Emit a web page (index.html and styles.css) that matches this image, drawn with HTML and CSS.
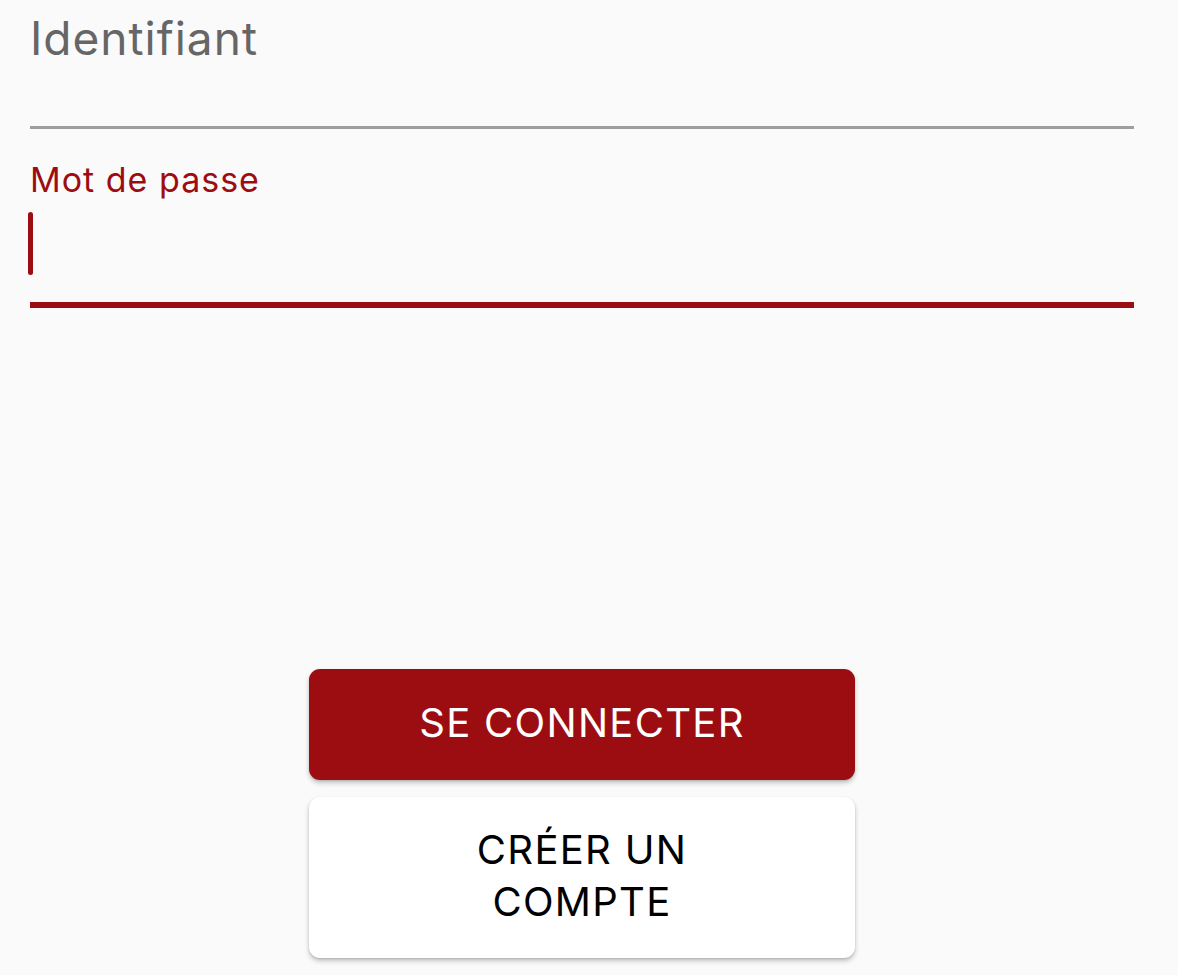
FILE: index.html
```html
<!DOCTYPE html>
<html lang="fr">
<head>
<meta charset="utf-8">
<title>Connexion</title>
<link rel="stylesheet" href="styles.css">
</head>
<body>
<main class="page">
  <form class="form">
    <div class="field field-id">
      <span class="field-label">Identifiant</span>
    </div>
    <div class="field field-pass">
      <span class="float-label">Mot de passe</span>
      <div class="input-area"><span class="caret"></span></div>
    </div>
    <div class="actions">
      <button type="button" class="btn btn-primary">SE CONNECTER</button>
      <button type="button" class="btn btn-secondary">CRÉER UN COMPTE</button>
    </div>
  </form>
</main>
</body>
</html>
```
FILE: styles.css
```css
html, body {
  margin: 0;
  padding: 0;
  background: #fafafa;
}
body {
  font-family: Inter, Roboto, "Noto Sans", sans-serif;
}
.page {
  width: 1178px;
  height: 975px;
  padding: 0 44px 0 30px;
  box-sizing: border-box;
}
.form {
  display: flex;
  flex-direction: column;
  height: 100%;
}
.field-id {
  height: 129px;
  box-sizing: border-box;
  padding-top: 10px;
  border-bottom: 3px solid #9e9e9e;
}
.field-label {
  display: block;
  font-size: 46px;
  line-height: 56px;
  letter-spacing: 1px;
  color: #666666;
}
.field-pass {
  margin-top: 30px;
  border-bottom: 6px solid #9c0d12;
}
.float-label {
  display: block;
  font-size: 34px;
  line-height: 42px;
  letter-spacing: 1px;
  color: #9c0d12;
}
.input-area {
  height: 101px;
  padding-top: 11px;
  box-sizing: border-box;
}
.caret {
  display: block;
  width: 5px;
  height: 63px;
  margin-left: -2px;
  border-radius: 3px;
  background: #9c0d12;
}
.actions {
  margin-top: 361px;
  display: flex;
  flex-direction: column;
  align-items: center;
  gap: 17px;
}
.btn {
  width: 546px;
  border: none;
  border-radius: 11px;
  font-family: Inter, Roboto, "Noto Sans", sans-serif;
  font-size: 40px;
  font-weight: 400;
  line-height: 52px;
  letter-spacing: 1.3px;
  padding: 0 80px 3px;
  box-shadow: 0 3px 5px rgba(0, 0, 0, 0.22), 0 1px 2px rgba(0, 0, 0, 0.12);
  cursor: pointer;
}
.btn-primary {
  height: 111px;
  background: #9c0d12;
  color: #ffffff;
}
.btn-secondary {
  height: 161px;
  background: #ffffff;
  color: #000000;
}
```
